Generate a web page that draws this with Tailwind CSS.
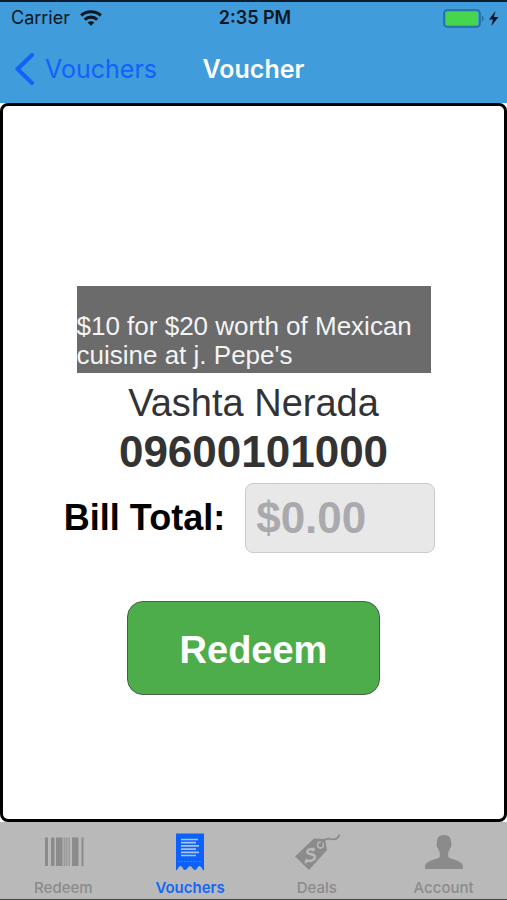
<!DOCTYPE html>
<html lang="en">
<head>
<meta charset="utf-8">
<meta name="viewport" content="width=device-width, initial-scale=1">
<title>Voucher</title>
<script src="https://cdn.jsdelivr.net/npm/@tailwindcss/browser@4"></script>
</head>
<body class="flex min-h-screen flex-col border-t-2 border-b border-t-[#0a1c2e] border-b-[#454545] bg-white font-['Liberation_Sans',Arial,sans-serif]">

<header class="bg-[#409cdb] font-['Inter',sans-serif]">
  <div class="grid h-8 grid-cols-3 items-center pr-2 pl-[11px] text-[18px] leading-8 text-[#0b1620]">
    <div class="flex items-center gap-[10px]">
      <span>Carrier</span>
      <svg class="h-4 w-[22px]" viewBox="0 0 22 16" fill="none" stroke="#0b1620" stroke-width="3.200" aria-label="Wi-Fi">
        <path d="M1.200 5.500C6.500.5 15.500.5 20.800 5.500"/>
        <path d="M4.700 9.600c3.600-3.200 9-3.200 12.600 0"/>
        <path d="M11 15.800l-3.400-3.300c1.900-1.700 4.900-1.700 6.800 0z" fill="#0b1620" stroke="none"/>
      </svg>
    </div>
    <div class="text-center font-semibold whitespace-nowrap">2:35 PM</div>
    <svg class="h-[19px] w-[56px] justify-self-end" viewBox="0 0 56 19" aria-label="Battery charging">
      <rect x="1" y="1" width="36" height="17" rx="3.500" fill="none" stroke="#24699c" stroke-width="1.600"/>
      <rect x="3" y="3" width="32" height="13" rx="1.500" fill="#46d64e"/>
      <path d="M39 6.500c2 .6 2 5.400 0 6z" fill="#24699c"/>
      <path d="M52.500 2L46 10.600h4L48.300 17 55.500 8h-4.500z" fill="#0b1620"/>
    </svg>
  </div>
  <nav class="grid h-[69px] grid-cols-3 items-center pr-[14px] pl-[14px] text-[25px] leading-8">
    <a href="#vouchers" class="flex items-center gap-[10px] text-[#1261fb]">
      <svg class="h-8 w-[21px] shrink-0" viewBox="0 0 21 32" fill="none" stroke="currentColor" stroke-width="4" stroke-linecap="round" stroke-linejoin="round"><path d="M18 2L3.500 16 18 30"/></svg>
      <span>Vouchers</span>
    </a>
    <h1 class="text-center font-semibold text-white">Voucher</h1>
  </nav>
</header>

<main class="flex flex-1 flex-col items-center justify-center rounded-lg border-[3px] border-black bg-white pt-14">
  <p class="w-[354px] bg-[#6b6b6b] pt-[26px] pb-[3px] text-[26px] leading-[29px] text-[#f4f4f4]">$10 for $20 worth of Mexican cuisine at j. Pepe's</p>
  <p class="mt-2 text-[38px] leading-[44px] text-[#333]">Vashta Nerada</p>
  <p class="mb-1 text-[44px] leading-[54px] font-bold text-[#333]">09600101000</p>
  <form class="flex flex-col items-center">
    <div class="flex items-center gap-5 pr-2">
      <label for="bill" class="text-[36px] leading-[44px] font-bold text-black">Bill Total:</label>
      <input id="bill" type="text" inputmode="decimal" placeholder="$0.00" class="h-[70px] w-[190px] rounded-lg border border-[#cbcbcb] bg-[#e8e8e8] px-[10px] text-[44px] font-bold text-black placeholder:text-[#aaaaae]">
    </div>
    <button type="button" class="mt-12 h-[94px] w-[253px] rounded-2xl border border-[#4a5f48] bg-[#4dad4a] pt-1 text-[38px] font-bold text-white">Redeem</button>
  </form>
</main>

<nav class="grid h-[77px] grid-cols-4 bg-[#b9b9b9] font-['Inter',sans-serif] text-[15px] leading-5 font-medium text-[#8b8b8b]">
  <a href="#redeem" class="flex flex-col items-center justify-end gap-1 pb-px">
    <svg class="h-[42px] w-[42px]" viewBox="0 0 42 42" fill="#8b8b8b">
      <path d="M3 5.500h3v28.500H3zM9 5.500h3.500v28.500H9zM14 5.500h6.500v28.500H14zM30 5.500h6.500v28.500H30zM39.500 5.500h2v28.500h-2z"/>
      <path d="M21.500 5.500h2v28.500h-2zM24 5.500h1.600v28.500H24zM26.500 5.500h1.500v28.500h-1.500z" opacity=".65"/>
    </svg>
    <span>Redeem</span>
  </a>
  <a href="#vouchers" aria-current="page" class="flex flex-col items-center justify-end gap-1 pb-px font-semibold text-[#1267f4]">
    <svg class="h-[42px] w-[42px]" viewBox="0 0 42 42">
      <path fill="#0b61fa" d="M7 1.500h28v37c-2-.5-2.500-4.500-4.500-4.500S28 38 26 38s-3-4-5-4-3 4-5 4-2.500-4-4.500-4S9 38 7 38.500z"/>
      <path fill="none" stroke="#a9c1ec" stroke-width="1.700" d="M12 7.500h17M12 10.700h15M12 13.900h18M12 17.100h15M12 20.300h18M12 23.500h15"/>
      <path fill="none" stroke="#3d7ff8" stroke-dasharray="2 1" d="M9 29.500h24"/>
    </svg>
    <span>Vouchers</span>
  </a>
  <a href="#deals" class="flex flex-col items-center justify-end gap-1 pb-px">
    <svg class="h-[42px] w-[46px]" viewBox="0 0 46 42">
      <path fill="#8b8b8b" d="M1 24.500L20 6.500l11 .5 2 11L15 38z"/>
      <circle cx="26.500" cy="13" r="3" fill="none" stroke="#b9b9b9" stroke-width="1.300"/>
      <path fill="none" stroke="#8b8b8b" stroke-width="1.800" d="M26 13c3-5 6-7 10-6 5 1.200 8 0 9.500-4.500"/>
      <path fill="none" stroke="#b9b9b9" stroke-width="2.400" d="M20.500 18.500c-3-3-8.500-.5-7 2.200 1.500 2.500 6.500.6 7.300 3.500.8 3.200-5 7-9 3.200M20 16L18 19M13.500 28l-2.500 3"/>
    </svg>
    <span>Deals</span>
  </a>
  <a href="#account" class="flex flex-col items-center justify-end gap-1 pb-px">
    <svg class="h-[42px] w-[42px]" viewBox="0 0 42 42">
      <path fill="#8b8b8b" d="M21 3c5 0 7.200 2.800 7 7.500l.5 1.500c0 2.500-.8 3.500-1.400 4-.4 2-1.100 3.300-1.900 4.300V24c0 1.200.6 1.800 2 2.300C33 28.300 40 30 40 34.500V37H2v-2.500c0-4.500 7-6.200 12.800-8.200 1.400-.5 2-1.100 2-2.300v-3.700c-.8-1-1.500-2.300-1.900-4.300-.6-.5-1.400-1.500-1.400-4l.5-1.500C13.800 5.800 16 3 21 3z"/>
    </svg>
    <span>Account</span>
  </a>
</nav>
</body>
</html>
